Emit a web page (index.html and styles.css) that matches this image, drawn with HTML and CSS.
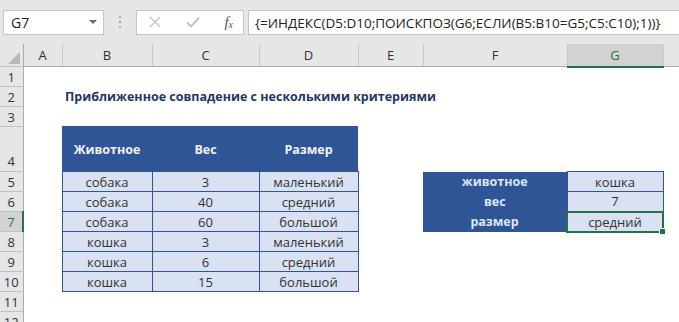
FILE: index.html
```html
<!DOCTYPE html>
<html lang="ru">
<head>
    <meta charset="UTF-8">
    <title>Приближенное совпадение</title>
    <link rel="stylesheet" href="styles.css">
</head>
<body>

<div class="formula-bar">
    <div class="name-box">
        <span>G7</span>
        <svg class="arrow" width="8" height="5" viewBox="0 0 8 5"><path d="M0 0h8L4 4z" fill="#6b6b6b"/></svg>
    </div>
    <div class="grip"><i></i><i></i><i></i></div>
    <div class="fx-box">
        <svg width="12" height="12" viewBox="0 0 12 12"><path d="M1 1l10 10M11 1L1 11" stroke="#c4c4c4" stroke-width="1.4"/></svg>
        <svg width="14" height="12" viewBox="0 0 14 12"><path d="M1 6.5l4 4L13 1.5" stroke="#c4c4c4" stroke-width="2" fill="none"/></svg>
        <span class="fx">f<sub>x</sub></span>
    </div>
    <div class="formula">{=ИНДЕКС(D5:D10;ПОИСКПОЗ(G6;ЕСЛИ(B5:B10=G5;C5:C10);1))}</div>
</div>

<table class="sheet">
    <colgroup>
        <col class="c-rh"><col class="c-a"><col class="c-b"><col class="c-c"><col class="c-d">
        <col class="c-e"><col class="c-f"><col class="c-g"><col>
    </colgroup>
    <tr class="col-heads">
        <th class="corner"><svg width="12" height="12" viewBox="0 0 12 12"><path d="M12 0v12H0z" fill="#b8b8b8"/></svg></th>
        <th>A</th><th>B</th><th>C</th><th>D</th><th>E</th><th>F</th><th class="sel-col">G</th><th></th>
    </tr>
    <tr><th>1</th><td></td><td></td><td></td><td></td><td></td><td></td><td></td><td></td></tr>
    <tr><th>2</th><td></td><td colspan="5" class="title">Приближенное совпадение с несколькими критериями</td><td></td><td></td></tr>
    <tr><th>3</th><td></td><td></td><td></td><td></td><td></td><td></td><td></td><td></td></tr>
    <tr class="tall">
        <th class="bottom">4</th><td></td>
        <td class="head">Животное</td><td class="head">Вес</td><td class="head">Размер</td>
        <td></td><td></td><td></td><td></td>
    </tr>
    <tr><th>5</th><td></td><td class="data">собака</td><td class="data">3</td><td class="data">маленький</td><td></td><td class="label">животное</td><td class="data">кошка</td><td></td></tr>
    <tr><th>6</th><td></td><td class="data">собака</td><td class="data">40</td><td class="data">средний</td><td></td><td class="label">вес</td><td class="data">7</td><td></td></tr>
    <tr><th class="sel-row">7</th><td></td><td class="data">собака</td><td class="data">60</td><td class="data">большой</td><td></td><td class="label">размер</td><td class="data active">средний<span class="handle"></span></td><td></td></tr>
    <tr><th>8</th><td></td><td class="data">кошка</td><td class="data">3</td><td class="data">маленький</td><td></td><td></td><td></td><td></td></tr>
    <tr><th>9</th><td></td><td class="data">кошка</td><td class="data">6</td><td class="data">средний</td><td></td><td></td><td></td><td></td></tr>
    <tr><th>10</th><td></td><td class="data">кошка</td><td class="data">15</td><td class="data">большой</td><td></td><td></td><td></td><td></td></tr>
    <tr><th>11</th><td></td><td></td><td></td><td></td><td></td><td></td><td></td><td></td></tr>
    <tr><th>12</th><td></td><td></td><td></td><td></td><td></td><td></td><td></td><td></td></tr>
</table>

</body>
</html>
```

FILE: styles.css
```css
body {
    margin: 0;
    background-color: #fff;
    font-family: 'Open Sans', 'Noto Sans', sans-serif;
    overflow: hidden;
}

/* Formula bar */
.formula-bar {
    display: flex;
    align-items: center;
    height: 44px;
    padding: 0 0 0 3px;
    background-color: #e6e6e6;
    box-sizing: border-box;
}

.name-box {
    display: flex;
    align-items: center;
    justify-content: space-between;
    width: 101px;
    height: 25px;
    padding: 0 6px 0 7px;
    box-sizing: border-box;
    background-color: #fff;
    border: 1px solid #c6c6c6;
    font-size: 14px;
    color: #222;
}

.grip {
    display: flex;
    flex-direction: column;
    gap: 3px;
    margin: 0 15px 0 15px;
}

.grip i {
    display: block;
    width: 2px;
    height: 2px;
    background-color: #aaa;
}

.fx-box {
    display: flex;
    align-items: center;
    justify-content: space-between;
    width: 108px;
    height: 25px;
    padding: 0 10px 0 12px;
    box-sizing: border-box;
    background-color: #fff;
    border: 1px solid #c6c6c6;
}

.fx {
    font-family: 'Liberation Serif', serif;
    font-style: italic;
    font-size: 15px;
    color: #555;
}

.fx sub {
    font-size: 10px;
    vertical-align: -1px;
}

.formula {
    flex: 1;
    height: 25px;
    margin-left: 4px;
    padding-left: 6px;
    background-color: #fff;
    border: 1px solid #c6c6c6;
    border-right: none;
    font-size: 13.5px;
    line-height: 24px;
    color: #222;
    white-space: nowrap;
    box-sizing: border-box;
}

/* Grid */
.sheet {
    table-layout: fixed;
    border-collapse: collapse;
    width: 679px;
    font-size: 13px;
    color: #333;
}

.c-rh { width: 23px; }
.c-a { width: 39px; }
.c-b { width: 90px; }
.c-c { width: 107px; }
.c-d { width: 99px; }
.c-e { width: 65px; }
.c-f { width: 144px; }
.c-g { width: 96px; }

.sheet tr { height: 20px; }
.sheet tr.tall { height: 45px; }

.sheet td {
    padding: 0;
    text-align: center;
    white-space: nowrap;
}

.sheet th {
    padding: 0;
    font-weight: normal;
    background-color: #e6e6e6;
    color: #333;
    font-size: 13px;
}

.col-heads th {
    height: 20px;
    border-left: 1px solid #c8c8c8;
    border-bottom: 1px solid #ababab;
}

.col-heads th.corner {
    border-left: none;
    text-align: right;
    vertical-align: bottom;
    padding: 0 3px 2px 0;
}

.corner svg { display: block; margin-left: auto; }

.col-heads th.sel-col {
    background-color: #d2d2d2;
    color: #217346;
    border-bottom: 2px solid #217346;
}

.sheet tr > th:first-child {
    border-bottom: 1px solid #c0c0c0;
    border-right: 1px solid #ababab;
}

.sheet tr > th.bottom { vertical-align: bottom; padding-bottom: 1px; }

.sheet tr > th.sel-row {
    background-color: #d2d2d2;
    color: #217346;
    border-right: 2px solid #217346;
}

.title {
    text-align: left !important;
    padding-left: 3px !important;
    font-size: 12.5px;
    font-weight: bold;
    color: #1f3864;
    overflow: visible;
}

.head {
    background-color: #2f5597;
    color: #f2f2f2;
    font-size: 12.5px;
    font-weight: bold;
    border-top: 1px solid #2f5597;
}

.data {
    background-color: #d9e1f2;
    border: 1px solid #2f5597;
    color: #333;
}

.label {
    background-color: #2f5597;
    color: #dde6f4;
    font-size: 12.5px;
    font-weight: bold;
}

.data.active {
    position: relative;
    border: 2px solid #217346;
}

.handle {
    position: absolute;
    right: -4px;
    bottom: -4px;
    width: 5px;
    height: 5px;
    background-color: #217346;
    border: 1px solid #fff;
}
```
